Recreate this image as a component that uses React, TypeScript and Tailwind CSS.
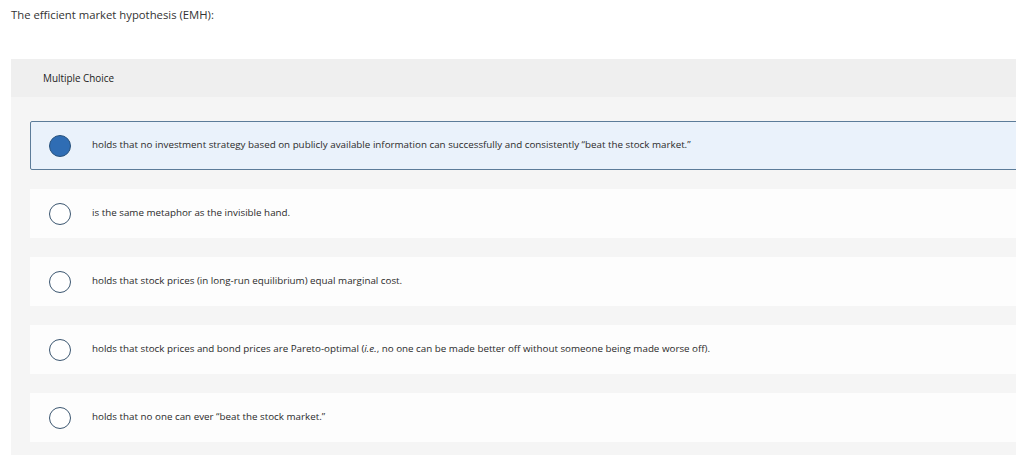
const options = [
  { text: <>holds that no investment strategy based on publicly available information can successfully and consistently “beat the stock market.”</>, selected: true },
  { text: <>is the same metaphor as the invisible hand.</> },
  { text: <>holds that stock prices (in long-run equilibrium) equal marginal cost.</> },
  {
    text: (
      <>
        holds that stock prices and bond prices are Pareto-optimal (<i>i.e.</i>, no one can be made better off without someone being made worse off).
      </>
    ),
  },
  { text: <>holds that no one can ever “beat the stock market.”</> },
];

export default function App() {
  return (
    <div className="w-[1016px] h-[455px] overflow-hidden bg-white font-['Open_Sans',sans-serif] text-[#333]">
      {/* Question */}
      <div className="pl-[11px] pt-[7px] h-[59px] text-[11.3px]">The efficient market hypothesis (EMH):</div>

      {/* Panel */}
      <div className="ml-[11px] w-[1030px] bg-[#f5f5f5]">
        <div className="h-[38px] flex items-center pl-[32px] bg-[#efefef] text-[9.9px] text-[#222]">Multiple Choice</div>
        <div className="pl-[19px] pt-[24px] pb-[20px] flex flex-col gap-[19px]">
          {options.map((o, i) => (
            <div
              key={i}
              className={
                o.selected
                  ? "h-[49px] flex items-center pl-[18px] bg-[#eaf2fb] border border-[#5c7c99] rounded-l-[2px]"
                  : "h-[49px] flex items-center pl-[19px] bg-[#fdfdfd]"
              }
            >
              {o.selected ? (
                <span className="w-[22px] h-[22px] rounded-full bg-[#2f6db4] border border-[#28527c] shrink-0" />
              ) : (
                <span className="w-[22px] h-[22px] rounded-full bg-white border-[1.5px] border-[#3b5670] shrink-0" />
              )}
              <span className="ml-[21px] text-[9.8px] text-[#2a2a2a] whitespace-nowrap">{o.text}</span>
            </div>
          ))}
        </div>
      </div>
    </div>
  );
}
